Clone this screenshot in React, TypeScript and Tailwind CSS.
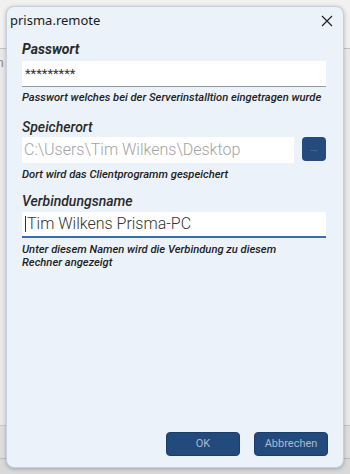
import React from "react";

export default function App() {
  const font = { fontFamily: "Roboto, 'Noto Sans', sans-serif" };
  return (
    <div className="relative w-[350px] h-[474px] overflow-hidden bg-[#e6e6e6]" style={font}>
      {/* desktop background behind the dialog */}
      <div className="flex flex-col h-full">
        <div className="h-[49px] bg-[#f1f1f1] border-b border-[#c4c4c4]" />
        <div className="flex-1 bg-[#e9e9e9] border-b border-[#c8c8c8]" />
        <div className="h-[33px] bg-[#dedede] border-b border-[#bdbdbd]" />
        <div className="h-[15px] bg-[#d9d9d9]" />
      </div>
      <span className="absolute left-[-3px] top-[54px] text-[12px] text-[#888]">n</span>

      {/* dialog window */}
      <div className="absolute left-[6px] top-[6px] w-[338px] h-[462px] rounded-[8px] bg-[#ebf2fa] border border-[#c9cfd6] shadow-[0_1px_4px_rgba(0,0,0,0.25)] flex flex-col">
        <div className="h-[28px] flex items-center justify-between pl-[3px] pr-[9px]">
          <span className="text-[13px] text-[#1a1a1a]" style={{ fontFamily: "'Noto Sans', sans-serif" }}>prisma.remote</span>
          <svg width="12" height="12" viewBox="0 0 12 12" className="mr-[1px]">
            <path d="M1 1 L11 11 M11 1 L1 11" stroke="#222" strokeWidth="1.2" />
          </svg>
        </div>

        <div className="flex flex-col pl-[15px] pr-[17px]">
          <div className="text-[14px] font-bold italic text-[#2a2a2a] leading-[16px] mt-[6px]">Passwort</div>
          <div className="mt-[4px] h-[26px] bg-white border-b border-[#9a9a9a] flex items-center pl-[3px] text-[13px] text-[#333]">*********</div>
          <div className="mt-[4px] text-[11.2px] font-medium italic text-[#222] leading-[13px] whitespace-nowrap">Passwort welches bei der Serverinstalltion eingetragen wurde</div>

          <div className="text-[14px] font-medium italic text-[#2a2a2a] leading-[16px] mt-[15px]">Speicherort</div>
          <div className="mt-[2px] flex gap-[8px]">
            <div className="flex-1 h-[26px] bg-white flex items-center pl-[2px] text-[16px] text-[#a3a3a3] font-light">C:\Users\Tim Wilkens\Desktop</div>
            <div className="w-[24px] h-[24px] rounded-[4px] bg-[#254b7c] flex items-center justify-center">
              <span className="text-[8px] text-[#8ea3c0] leading-none">...</span>
            </div>
          </div>
          <div className="mt-[5px] text-[11.2px] font-medium italic text-[#222] leading-[13px]">Dort wird das Clientprogramm gespeichert</div>

          <div className="text-[14px] font-medium italic text-[#2a2a2a] leading-[16px] mt-[12px]">Verbindungsname</div>
          <div className="mt-[3px] h-[26px] bg-white border-b-2 border-[#3a6db0] flex items-center pl-[3px] text-[16px] text-[#333] font-light">
            <span className="w-[1px] h-[16px] bg-[#333] mr-[1px]" />
            Tim Wilkens Prisma-PC
          </div>
          <div className="mt-[5px] text-[11.2px] font-medium italic text-[#222] leading-[13px] w-[272px]">Unter diesem Namen wird die Verbindung zu diesem Rechner angezeigt</div>
        </div>

        <div className="mt-auto mb-[11px] flex justify-end gap-[14px] pr-[15px]">
          <button className="w-[74px] h-[24px] rounded-[4px] bg-[#234a7c] border border-[#1c3d68] text-[11px] text-[#a9b9d0]">OK</button>
          <button className="w-[74px] h-[24px] rounded-[4px] bg-[#234a7c] border border-[#1c3d68] text-[11px] text-[#a9b9d0]">Abbrechen</button>
        </div>
      </div>
    </div>
  );
}
